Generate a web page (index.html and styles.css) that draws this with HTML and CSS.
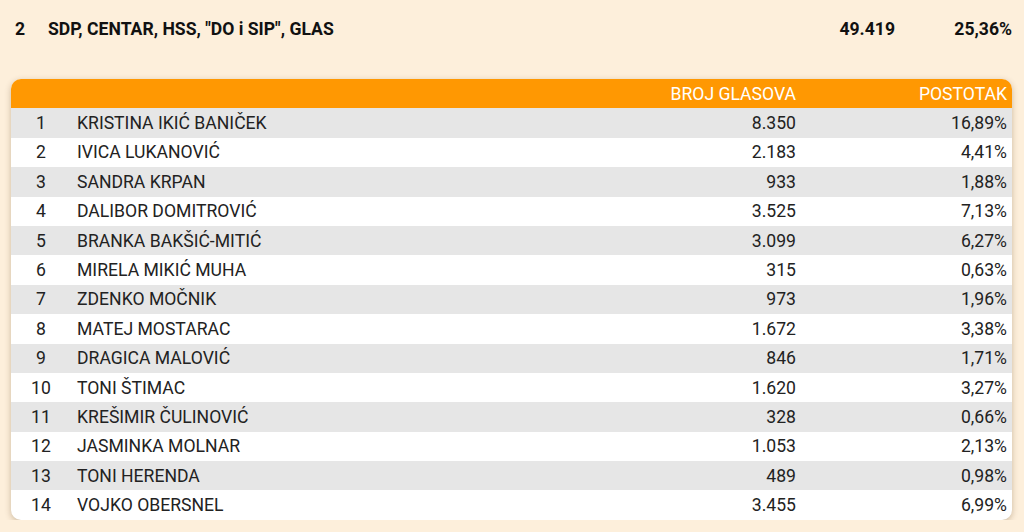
FILE: index.html
```html
<!DOCTYPE html>
<html lang="hr">
<head>
<meta charset="utf-8">
<title>Rezultati</title>
<link rel="stylesheet" href="styles.css">
</head>
<body>
<div class="page">
  <div class="list-row">
    <span class="list-rank">2</span>
    <span class="list-name">SDP, CENTAR, HSS, "DO i SIP", GLAS</span>
    <span class="list-votes">49.419</span>
    <span class="list-pct">25,36%</span>
  </div>
  <div class="card">
    <div class="row head">
      <span class="rank"></span>
      <span class="name"></span>
      <span class="votes">BROJ GLASOVA</span>
      <span class="pct">POSTOTAK</span>
    </div>
    <div class="row"><span class="rank">1</span><span class="name">KRISTINA IKIĆ BANIČEK</span><span class="votes">8.350</span><span class="pct">16,89%</span></div>
    <div class="row"><span class="rank">2</span><span class="name">IVICA LUKANOVIĆ</span><span class="votes">2.183</span><span class="pct">4,41%</span></div>
    <div class="row"><span class="rank">3</span><span class="name">SANDRA KRPAN</span><span class="votes">933</span><span class="pct">1,88%</span></div>
    <div class="row"><span class="rank">4</span><span class="name">DALIBOR DOMITROVIĆ</span><span class="votes">3.525</span><span class="pct">7,13%</span></div>
    <div class="row"><span class="rank">5</span><span class="name">BRANKA BAKŠIĆ-MITIĆ</span><span class="votes">3.099</span><span class="pct">6,27%</span></div>
    <div class="row"><span class="rank">6</span><span class="name">MIRELA MIKIĆ MUHA</span><span class="votes">315</span><span class="pct">0,63%</span></div>
    <div class="row"><span class="rank">7</span><span class="name">ZDENKO MOČNIK</span><span class="votes">973</span><span class="pct">1,96%</span></div>
    <div class="row"><span class="rank">8</span><span class="name">MATEJ MOSTARAC</span><span class="votes">1.672</span><span class="pct">3,38%</span></div>
    <div class="row"><span class="rank">9</span><span class="name">DRAGICA MALOVIĆ</span><span class="votes">846</span><span class="pct">1,71%</span></div>
    <div class="row"><span class="rank">10</span><span class="name">TONI ŠTIMAC</span><span class="votes">1.620</span><span class="pct">3,27%</span></div>
    <div class="row"><span class="rank">11</span><span class="name">KREŠIMIR ČULINOVIĆ</span><span class="votes">328</span><span class="pct">0,66%</span></div>
    <div class="row"><span class="rank">12</span><span class="name">JASMINKA MOLNAR</span><span class="votes">1.053</span><span class="pct">2,13%</span></div>
    <div class="row"><span class="rank">13</span><span class="name">TONI HERENDA</span><span class="votes">489</span><span class="pct">0,98%</span></div>
    <div class="row"><span class="rank">14</span><span class="name">VOJKO OBERSNEL</span><span class="votes">3.455</span><span class="pct">6,99%</span></div>
  </div>
</div>
</body>
</html>
```

FILE: styles.css
```css
html, body {
  margin: 0;
  padding: 0;
  background: #fdefdb;
}
body {
  font-family: Roboto, "Liberation Sans", sans-serif;
  font-size: 17.6px;
  color: #222;
}
.page {
  padding: 0 12px 0 11px;
}
.list-row {
  display: flex;
  align-items: center;
  height: 58px;
  font-weight: 700;
  color: #111;
  padding-left: 4px;
}
.list-rank {
  width: 33px;
}
.list-name {
  flex: 1;
}
.list-votes {
  text-align: right;
}
.list-pct {
  width: 117px;
  text-align: right;
}
.card {
  margin-top: 21px;
  background: #fff;
  border-radius: 10px;
  overflow: hidden;
  box-shadow: 0 2px 6px rgba(90, 60, 20, 0.3);
}
.row {
  display: flex;
  align-items: center;
  height: 29.4px;
  padding-right: 5px;
}
.row:nth-child(even) {
  background: #e6e6e6;
}
.row.head {
  background: #ff9802;
  color: #fff;
}
.rank {
  width: 60px;
  text-align: center;
}
.name {
  flex: 1;
  padding-left: 6px;
}
.votes {
  width: 200px;
  text-align: right;
}
.pct {
  width: 211px;
  text-align: right;
}
```
